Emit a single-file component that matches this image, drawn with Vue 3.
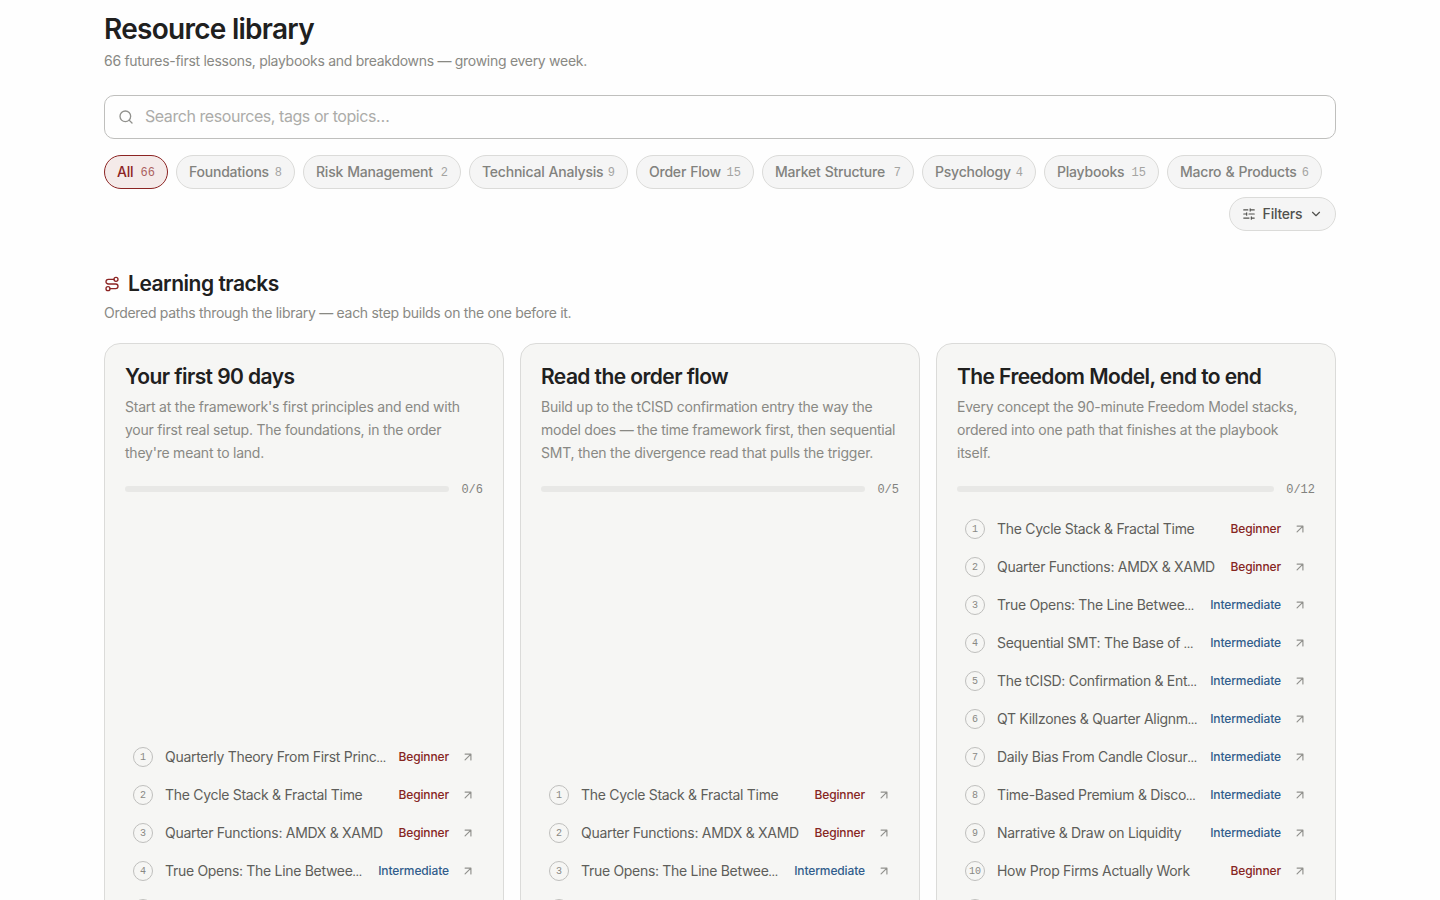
<template>
  <main class="library">
    <header class="page-header">
      <h1>Resource library</h1>
      <p>66 futures-first lessons, playbooks and breakdowns — growing every week.</p>
    </header>

    <label class="search-box">
      <svg class="icon icon-search" viewBox="0 0 24 24">
        <circle cx="11" cy="11" r="8" />
        <path d="m21 21-4.34-4.34" />
      </svg>
      <input v-model="query" type="text" placeholder="Search resources, tags or topics…" />
    </label>

    <div class="toolbar">
      <div class="chips">
        <button
          v-for="cat in categories"
          :key="cat.name"
          :class="['chip', { active: cat.name === activeCategory }]"
          :style="{ width: `${cat.width}px` }"
          @click="activeCategory = cat.name"
        >
          <span class="chip-name">{{ cat.name }}</span>
          <span class="chip-count">{{ cat.count }}</span>
        </button>
      </div>
      <button class="chip filters">
        <svg class="icon icon-sliders" viewBox="0 0 24 24">
          <path d="M10 5H3M12 19H3M14 3v4M16 17v4M21 12h-9M21 19h-5M21 5h-7M8 10v4M8 12H3" />
        </svg>
        <span class="chip-name">Filters</span>
        <svg class="icon icon-chevron" viewBox="0 0 24 24"><path d="m6 9 6 6 6-6" /></svg>
      </button>
    </div>

    <section class="tracks">
      <h2>
        <svg class="icon icon-route" viewBox="0 0 24 24">
          <circle cx="6" cy="19" r="3" />
          <path d="M9 19h8.5a3.5 3.5 0 0 0 0-7h-11a3.5 3.5 0 0 1 0-7H15" />
          <circle cx="18" cy="5" r="3" />
        </svg>
        <span>Learning tracks</span>
      </h2>
      <p class="tracks-intro">
        Ordered paths through the library — each step builds on the one before it.
      </p>

      <div class="track-grid">
        <article v-for="track in tracks" :key="track.title" class="track-card">
          <h3>{{ track.title }}</h3>
          <p class="track-desc">
            <template v-for="(line, i) in track.desc" :key="i">{{ line }}<br /></template>
          </p>
          <div class="progress">
            <div class="progress-bar">
              <div class="progress-fill" :style="{ width: percent(track) }"></div>
            </div>
            <span class="progress-text">{{ track.done }}/{{ track.steps.length }}</span>
          </div>
          <ol class="steps">
            <li v-for="(step, i) in track.steps" :key="step[0]" class="step">
              <span class="step-number">{{ i + 1 }}</span>
              <span class="step-title"
                >{{ step[0] }}<span v-if="step[2]" class="dots">…</span></span
              >
              <span :class="['step-level', step[1].toLowerCase()]">{{ step[1] }}</span>
              <svg class="icon icon-arrow" viewBox="0 0 24 24">
                <path d="M7 7h10v10M7 17 17 7" />
              </svg>
            </li>
          </ol>
        </article>
      </div>
    </section>
  </main>
</template>

<script setup>
import { ref } from "vue";

const query = ref("");
const activeCategory = ref("All");

const categories = [
  { name: "All", count: 66, width: 64 },
  { name: "Foundations", count: 8, width: 119 },
  { name: "Risk Management", count: 2, width: 158 },
  { name: "Technical Analysis", count: 9, width: 159 },
  { name: "Order Flow", count: 15, width: 118 },
  { name: "Market Structure", count: 7, width: 152 },
  { name: "Psychology", count: 4, width: 114 },
  { name: "Playbooks", count: 15, width: 115 },
  { name: "Macro & Products", count: 6, width: 155 },
];

const B = "Beginner";
const I = "Intermediate";

// [title, level, shortened]
const tracks = [
  {
    title: "Your first 90 days",
    desc: [
      "Start at the framework's first principles and end with",
      "your first real setup. The foundations, in the order",
      "they're meant to land.",
    ],
    done: 0,
    steps: [
      ["Quarterly Theory From First Princ", B, true],
      ["The Cycle Stack & Fractal Time", B],
      ["Quarter Functions: AMDX & XAMD", B],
      ["True Opens: The Line Betwee", I, true],
      ["Narrative & Draw on Liquidity", I],
      ["How Prop Firms Actually Work", B],
    ],
  },
  {
    title: "Read the order flow",
    desc: [
      "Build up to the tCISD confirmation entry the way the",
      "model does — the time framework first, then sequential",
      "SMT, then the divergence read that pulls the trigger.",
    ],
    done: 0,
    steps: [
      ["The Cycle Stack & Fractal Time", B],
      ["Quarter Functions: AMDX & XAMD", B],
      ["True Opens: The Line Betwee", I, true],
      ["Sequential SMT: The Base of ", I, true],
      ["The tCISD: Confirmation & Ent", I, true],
    ],
  },
  {
    title: "The Freedom Model, end to end",
    desc: [
      "Every concept the 90-minute Freedom Model stacks,",
      "ordered into one path that finishes at the playbook",
      "itself.",
    ],
    done: 0,
    steps: [
      ["The Cycle Stack & Fractal Time", B],
      ["Quarter Functions: AMDX & XAMD", B],
      ["True Opens: The Line Betwee", I, true],
      ["Sequential SMT: The Base of ", I, true],
      ["The tCISD: Confirmation & Ent", I, true],
      ["QT Killzones & Quarter Alignm", I, true],
      ["Daily Bias From Candle Closur", I, true],
      ["Time-Based Premium & Disco", I, true],
      ["Narrative & Draw on Liquidity", I],
      ["How Prop Firms Actually Work", B],
      ["Building a Trading Plan", B],
      ["The Freedom Model Playbook", I],
    ],
  },
];

const percent = (track) => `${(track.done / track.steps.length) * 100}%`;
</script>

<style>
html,
body {
  background: #fefefe;
}
</style>

<style scoped>
.library {
  box-sizing: border-box;
  width: 1232px;
  height: 900px;
  margin: 0 auto;
  padding-top: 11px;
  overflow: hidden;
  font-family: Inter, "Liberation Sans", sans-serif;
  font-size: 14px;
  color: #20201e;
}
h1,
h2,
h3,
p,
ol {
  margin: 0;
  padding: 0;
}
.icon {
  flex: none;
  fill: none;
  stroke: currentColor;
  stroke-width: 2;
  stroke-linecap: round;
  stroke-linejoin: round;
}
h1 {
  font-size: 28px;
  font-weight: 600;
  line-height: 36px;
  letter-spacing: -0.73px;
}
.page-header p,
.tracks-intro {
  line-height: 22px;
  letter-spacing: -0.29px;
  color: #898984;
}
.page-header p {
  margin-top: 3px;
}
.search-box {
  box-sizing: border-box;
  display: flex;
  align-items: center;
  gap: 11px;
  height: 44px;
  margin-top: 23px;
  padding: 0 13px;
  border: 1px solid #bfbfbd;
  border-radius: 10px;
}
.icon-search {
  width: 16px;
  height: 16px;
  color: #91918d;
}
.search-box input {
  flex: 1;
  padding: 0 0 2px;
  border: none;
  outline: none;
  background: none;
  font: inherit;
  font-size: 16px;
  letter-spacing: -0.44px;
  color: inherit;
}
.search-box input::placeholder {
  color: #acaca9;
}
.toolbar {
  display: flex;
  flex-wrap: wrap;
  justify-content: flex-end;
  gap: 8px;
  margin-top: 16px;
}
.chips {
  display: flex;
  gap: 8px;
  width: 100%;
}
.chip {
  box-sizing: border-box;
  display: flex;
  flex: none;
  align-items: center;
  justify-content: space-between;
  height: 34px;
  padding: 0 12px;
  border: 1px solid #dbdbd9;
  border-radius: 17px;
  background: #f5f5f5;
  color: #82827e;
  font: inherit;
  font-weight: 500;
  white-space: nowrap;
}
.chip-name {
  padding-bottom: 1px;
  letter-spacing: -0.22px;
  word-spacing: 0.6px;
}
.chip-count {
  padding-top: 1px;
  font-family: "Liberation Mono", monospace;
  font-size: 12px;
  font-weight: 400;
  opacity: 0.7;
}
.chip.active {
  border-color: #8c2423;
  background: #f4eae9;
  color: #8c2423;
}
.filters {
  width: 107px;
  color: #51514e;
}
.icon-sliders {
  width: 14px;
  height: 14px;
}
.icon-chevron {
  width: 14px;
  height: 14px;
}
.tracks h2 {
  display: flex;
  align-items: center;
  gap: 8px;
  margin-top: 39px;
  font-size: 21px;
  font-weight: 600;
  line-height: 28px;
  letter-spacing: -0.48px;
}
.icon-route {
  width: 16px;
  height: 16px;
  color: #8c2423;
}
.tracks-intro {
  margin-top: 4px;
}
.track-grid {
  display: grid;
  grid-template-columns: repeat(3, 1fr);
  gap: 16px;
  margin-top: 19px;
}
.track-card {
  display: flex;
  flex-direction: column;
  min-width: 0;
  padding: 20px;
  border: 1px solid #dbdbd9;
  border-radius: 16px;
  background: #f6f6f4;
}
.track-card h3 {
  font-size: 21px;
  font-weight: 600;
  line-height: 26px;
  letter-spacing: -0.58px;
}
.track-desc {
  margin-top: 5px;
  line-height: 23px;
  letter-spacing: -0.23px;
  color: #898984;
  white-space: nowrap;
}
.progress {
  display: flex;
  align-items: center;
  gap: 12px;
  height: 18px;
  margin-top: 16px;
}
.progress-bar {
  flex: 1;
  height: 6px;
  border-radius: 3px;
  background: #e8e8e6;
}
.progress-fill {
  height: 100%;
  border-radius: 3px;
  background: #8c2423;
}
.progress-text {
  padding-top: 1px;
  font-family: "Liberation Mono", monospace;
  font-size: 12px;
  color: #82827e;
}
.steps {
  margin-top: auto;
  padding-top: 12px;
  list-style: none;
}
.step {
  box-sizing: border-box;
  display: flex;
  align-items: center;
  gap: 12px;
  height: 38px;
  padding: 0 8px;
}
.step-number {
  box-sizing: border-box;
  flex: none;
  width: 20px;
  height: 20px;
  border: 1px solid #bfbfbd;
  border-radius: 50%;
  font-family: "Liberation Mono", monospace;
  font-size: 10px;
  line-height: 19px;
  text-align: center;
  color: #898984;
}
.step-title {
  flex: 1;
  min-width: 0;
  white-space: nowrap;
  line-height: 22px;
  letter-spacing: -0.3px;
  color: #5e5e5a;
}
.dots {
  font-size: 10px;
  font-weight: 600;
  line-height: 1;
}
.step-level {
  padding-bottom: 1px;
  font-size: 12px;
  font-weight: 500;
  letter-spacing: -0.12px;
}
.beginner {
  color: #86261f;
}
.intermediate {
  color: #315d8c;
}
.icon-arrow {
  width: 14px;
  height: 14px;
  color: #91918d;
}
</style>
